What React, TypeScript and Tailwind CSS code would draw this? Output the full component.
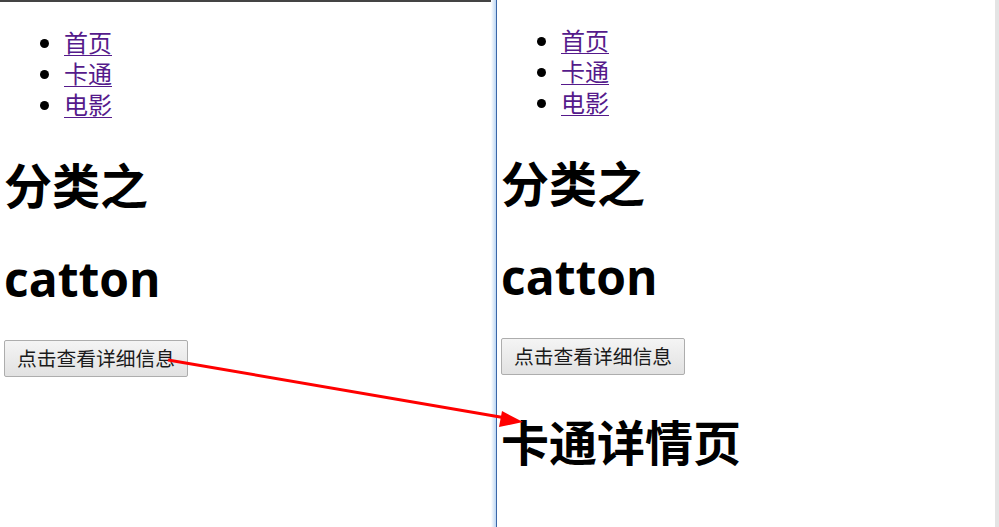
import React from 'react'

const links = ['首页', '卡通', '电影']

function Pane({ showDetail }: { showDetail: boolean }) {
  return (
    <div className="-mt-[3px] pl-[4px]">
      <ul className="list-disc pl-[60px] pt-[28px] text-[24px] leading-[31px] marker:text-black">
        {links.map((l) => (
          <li key={l}>
            <a href="#" className="text-[#551a8b] underline decoration-1 underline-offset-[3px]">
              {l}
            </a>
          </li>
        ))}
      </ul>
      <h1 className="mt-[38px] text-[48px] font-bold leading-[56px] text-black">分类之</h1>
      <h1 className="mt-[37px] text-[48px] font-bold leading-[56px] text-black">catton</h1>
      <button className="mt-[33px] h-[37px] w-[184px] rounded-[2px] border border-[#adadad] bg-gradient-to-b from-[#f4f4f4] to-[#e2e2e2] text-[19.75px] leading-none text-[#1a1a1a]">
        点击查看详细信息
      </button>
      {showDetail && (
        <h1 className="mt-[40px] text-[48px] font-bold leading-[56px] text-black">卡通详情页</h1>
      )}
    </div>
  )
}

export default function App() {
  return (
    <div
      className="relative flex h-[527px] w-[999px] overflow-hidden bg-white"
      style={{ fontFamily: '"Open Sans", "Noto Sans CJK SC", sans-serif' }}
    >
      <div className="h-full w-[491px] border-t-2 border-[#444]">
        <Pane showDetail={false} />
      </div>
      <div className="h-full w-[5px] bg-gradient-to-r from-white to-[#bcd6f2]" />
      <div className="h-full w-[1px] bg-[#3a66a8]" />
      <div className="h-full w-[498px]">
        <Pane showDetail={true} />
      </div>
      <div className="h-full w-[4px] bg-[#e4e4e4]" />
      <svg className="pointer-events-none absolute left-0 top-0" width="999" height="527">
        <line x1="168" y1="360" x2="506" y2="418" stroke="#ff0000" strokeWidth="3" />
        <polygon points="523,422 502,411 499,427" fill="#ff0000" />
      </svg>
    </div>
  )
}
